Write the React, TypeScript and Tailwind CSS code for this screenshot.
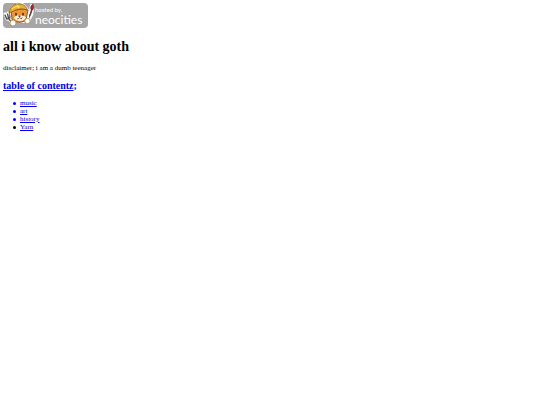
const sections = [
  { label: 'music', href: '#music', bullet: 'bg-[#0000ee]' },
  { label: 'art', href: '#art', bullet: 'bg-[#0000ee]' },
  { label: 'history', href: '#history', bullet: 'bg-[#0000ee]' },
  { label: 'Yarn', href: '#yarn', bullet: 'bg-black' },
];

function PennyCat() {
  return (
    <svg viewBox="-1 0 32 26" className="h-[26px] w-8 shrink-0" aria-hidden="true">
      {/* fork */}
      <path d="M1 11l2 5 3 0 1-6M4 10l1 6 4 5" fill="none" stroke="#fff" strokeWidth="3" strokeLinecap="round" strokeLinejoin="round" />
      <path d="M.8 11.500l2 4.500 3-1 .2-5M3.500 10.500l1 5 4 5" fill="none" stroke="#4a4a4a" strokeWidth="1.300" />
      {/* brush */}
      <path d="M28 3l-1 8-3 6" fill="none" stroke="#fff" strokeWidth="4.500" strokeLinecap="round" />
      <path d="M28 6l-1.500 5-2.500 5" fill="none" stroke="#683a30" strokeWidth="1.600" />
      <path d="M27 6.500c-1-2 0-4.500 2-5.500 1 2 1 4 0 5.500z" fill="#b51f2c" stroke="#532128" strokeWidth=".6" />
      {/* head and hard hat */}
      <path d="M5 8C6 2 13-1 19 0l4 4 2 3v9l-5 4-9-1-4-5z" fill="#fff" />
      <path d="M7 8l1 8c3 4 11 4 14 1l2-10-4-1-9 1z" fill="#ee943a" stroke="#6b3c18" strokeWidth=".8" />
      <path d="M10 15c1-3 4-3 6-2 3-1 5 0 6 2-3 4-9 4-12 0z" fill="#fff5df" />
      <path d="M5 10C6 3 11 0 17 1c4 1 6 4 6 6-5-2-10-1-13 1z" fill="#e5b235" stroke="#805614" strokeWidth=".8" />
      <path d="M8 6c2-2 5-3 8-2M13 1.500l2 4" fill="none" stroke="#ffe27a" strokeWidth="1" />
      <path d="M12 10.500v1.500M19 10.500v1.500" stroke="#2d1a0d" strokeWidth="1.400" strokeLinecap="round" />
      <path d="M14.500 13h2l-1 1zM13 15.500c1 1 2 0 2.500-1 1 1 2 2 3 0" fill="#a34a2d" stroke="#5a2a18" strokeWidth=".5" />
      {/* paws */}
      <path d="M10 16l-1 3M21 16l3 2" stroke="#d9822e" strokeWidth="2.500" />
      <circle cx="9" cy="20" r="3" fill="#fff" stroke="#a87a43" strokeWidth=".7" />
      <circle cx="23.500" cy="18" r="2.700" fill="#fff" stroke="#a87a43" strokeWidth=".7" />
    </svg>
  );
}

function HostedBadge() {
  return (
    <a
      href="https://neocities.org"
      className="flex h-[25px] w-[85px] overflow-hidden rounded-[4px] bg-[#a6a6a6] font-['Lato',sans-serif] text-white"
    >
      <PennyCat />
      <span className="flex flex-col pt-[3px]">
        <span className="text-[6px] leading-[7px]">hosted by,</span>
        <span className="text-[12px] leading-[14px]">neocities</span>
      </span>
    </a>
  );
}

export default function App() {
  return (
    <main className="p-[3px] font-['Liberation_Serif',serif] text-[7px] leading-[8px] text-black">
      <HostedBadge />
      <h1 className="mt-[11px] text-[14px] leading-4 font-bold">all i know about goth</h1>
      <p className="mt-[9px]">disclaimer; i am a dumb teenager</p>
      <h2 className="mt-2 text-[10px] leading-3 font-bold text-[#0000ee]">
        <a href="#contents"><span className="underline">table of contentz</span>;</a>
      </h2>
      <ul className="mt-[7px] pl-[10px]">
        {sections.map(section => (
          <li key={section.label} className="flex items-center gap-1">
            <span className={`size-[3px] rounded-full ${section.bullet}`} />
            <a href={section.href} className="text-[#0000ee] underline">{section.label}</a>
          </li>
        ))}
      </ul>
    </main>
  );
}
